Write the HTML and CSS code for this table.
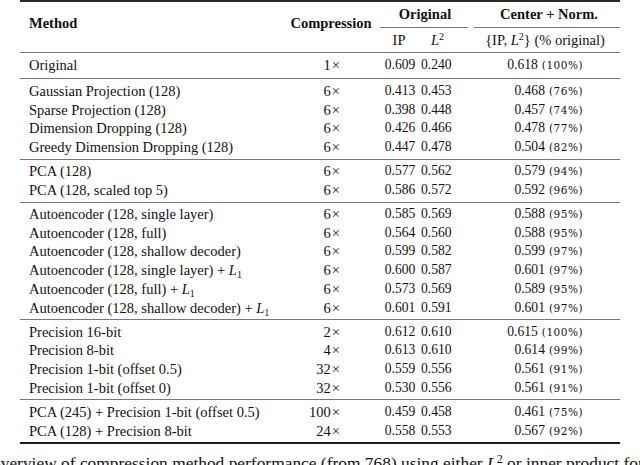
FILE: index.html
```html
<!DOCTYPE html>
<html>
<head>
<meta charset="utf-8">
<link rel="stylesheet" href="styles.css">
</head>
<body>
<div class="tbl">
  <div class="head">
    <div class="h-method">Method</div>
    <div class="h-comp">Compression</div>
    <div class="h-orig">Original</div>
    <div class="h-center">Center + Norm.</div>
    <div class="cmid cmid-orig"></div>
    <div class="cmid cmid-center"></div>
    <div class="h-ip">IP</div>
    <div class="h-l2"><i>L</i><sup>2</sup></div>
    <div class="h-combo">{IP, <i>L</i><sup>2</sup>} (% original)</div>
  </div>

  <div class="group group-first">
    <div class="row"><span class="m">Original</span><span class="c">1<span class="x">×</span></span><span class="ip">0.609</span><span class="l2">0.240</span><span class="cn">0.618<span class="pct">(100%)</span></span></div>
  </div>

  <div class="group">
    <div class="row"><span class="m">Gaussian Projection (128)</span><span class="c">6<span class="x">×</span></span><span class="ip">0.413</span><span class="l2">0.453</span><span class="cn">0.468<span class="pct">(76%)</span></span></div>
    <div class="row"><span class="m">Sparse Projection (128)</span><span class="c">6<span class="x">×</span></span><span class="ip">0.398</span><span class="l2">0.448</span><span class="cn">0.457<span class="pct">(74%)</span></span></div>
    <div class="row"><span class="m">Dimension Dropping (128)</span><span class="c">6<span class="x">×</span></span><span class="ip">0.426</span><span class="l2">0.466</span><span class="cn">0.478<span class="pct">(77%)</span></span></div>
    <div class="row"><span class="m">Greedy Dimension Dropping (128)</span><span class="c">6<span class="x">×</span></span><span class="ip">0.447</span><span class="l2">0.478</span><span class="cn">0.504<span class="pct">(82%)</span></span></div>
  </div>

  <div class="group">
    <div class="row"><span class="m">PCA (128)</span><span class="c">6<span class="x">×</span></span><span class="ip">0.577</span><span class="l2">0.562</span><span class="cn">0.579<span class="pct">(94%)</span></span></div>
    <div class="row"><span class="m">PCA (128, scaled top 5)</span><span class="c">6<span class="x">×</span></span><span class="ip">0.586</span><span class="l2">0.572</span><span class="cn">0.592<span class="pct">(96%)</span></span></div>
  </div>

  <div class="group">
    <div class="row"><span class="m">Autoencoder (128, single layer)</span><span class="c">6<span class="x">×</span></span><span class="ip">0.585</span><span class="l2">0.569</span><span class="cn">0.588<span class="pct">(95%)</span></span></div>
    <div class="row"><span class="m">Autoencoder (128, full)</span><span class="c">6<span class="x">×</span></span><span class="ip">0.564</span><span class="l2">0.560</span><span class="cn">0.588<span class="pct">(95%)</span></span></div>
    <div class="row"><span class="m">Autoencoder (128, shallow decoder)</span><span class="c">6<span class="x">×</span></span><span class="ip">0.599</span><span class="l2">0.582</span><span class="cn">0.599<span class="pct">(97%)</span></span></div>
    <div class="row"><span class="m">Autoencoder (128, single layer) + <i>L</i><sub>1</sub></span><span class="c">6<span class="x">×</span></span><span class="ip">0.600</span><span class="l2">0.587</span><span class="cn">0.601<span class="pct">(97%)</span></span></div>
    <div class="row"><span class="m">Autoencoder (128, full) + <i>L</i><sub>1</sub></span><span class="c">6<span class="x">×</span></span><span class="ip">0.573</span><span class="l2">0.569</span><span class="cn">0.589<span class="pct">(95%)</span></span></div>
    <div class="row"><span class="m">Autoencoder (128, shallow decoder) + <i>L</i><sub>1</sub></span><span class="c">6<span class="x">×</span></span><span class="ip">0.601</span><span class="l2">0.591</span><span class="cn">0.601<span class="pct">(97%)</span></span></div>
  </div>

  <div class="group">
    <div class="row"><span class="m">Precision 16-bit</span><span class="c">2<span class="x">×</span></span><span class="ip">0.612</span><span class="l2">0.610</span><span class="cn">0.615<span class="pct">(100%)</span></span></div>
    <div class="row"><span class="m">Precision 8-bit</span><span class="c">4<span class="x">×</span></span><span class="ip">0.613</span><span class="l2">0.610</span><span class="cn">0.614<span class="pct">(99%)</span></span></div>
    <div class="row"><span class="m">Precision 1-bit (offset 0.5)</span><span class="c">32<span class="x">×</span></span><span class="ip">0.559</span><span class="l2">0.556</span><span class="cn">0.561<span class="pct">(91%)</span></span></div>
    <div class="row"><span class="m">Precision 1-bit (offset 0)</span><span class="c">32<span class="x">×</span></span><span class="ip">0.530</span><span class="l2">0.556</span><span class="cn">0.561<span class="pct">(91%)</span></span></div>
  </div>

  <div class="group">
    <div class="row"><span class="m">PCA (245) + Precision 1-bit (offset 0.5)</span><span class="c">100<span class="x">×</span></span><span class="ip">0.459</span><span class="l2">0.458</span><span class="cn">0.461<span class="pct">(75%)</span></span></div>
    <div class="row"><span class="m">PCA (128) + Precision 8-bit</span><span class="c">24<span class="x">×</span></span><span class="ip">0.558</span><span class="l2">0.553</span><span class="cn">0.567<span class="pct">(92%)</span></span></div>
  </div>
</div>
<p class="caption">overview of compression method performance (from 768) using either <i>L</i><sup>2</sup> or inner product for</p>
</body>
</html>
```

FILE: styles.css
```css
html, body {
  margin: 0;
  padding: 0;
  background: #fff;
}

body {
  width: 640px;
  height: 465px;
  overflow: hidden;
  font-family: "Liberation Serif", "Times New Roman", serif;
  color: #111;
}

.tbl {
  margin-left: 20px;
  width: 600px;
  border-top: 2px solid #2a2a2a;
  border-bottom: 2px solid #1e1e1e;
  font-size: 14.5px;
  line-height: 18.7px;
}

.head,
.row {
  display: grid;
  grid-template-columns: 270px 82px 8px 38px 52px 150px;
}

.row {
  height: 18.7px;
}

.head {
  grid-template-rows: 25px 1px 24px;
}

.h-method,
.h-comp {
  grid-row: 1 / 4;
  font-weight: bold;
  padding-top: 11.6px;
}

.h-method {
  grid-column: 1;
  padding-left: 9px;
}

.h-comp {
  grid-column: 2;
  text-align: center;
}

.h-orig,
.h-center {
  grid-row: 1;
  align-self: center;
  font-weight: bold;
  text-align: center;
}

.h-orig {
  grid-column: 4 / 6;
}

.h-center {
  grid-column: 6;
  padding-left: 8px;
}

.cmid {
  grid-row: 2;
  background: #777;
}

.cmid-orig {
  grid-column: 4 / 6;
  margin-right: 2px;
}

.cmid-center {
  grid-column: 6;
  margin-left: 4px;
}

.h-ip,
.h-l2,
.h-combo {
  grid-row: 3;
  align-self: center;
}

.h-ip {
  grid-column: 4;
  text-align: center;
}

.h-l2 {
  grid-column: 5;
  padding-left: 13px;
}

.h-combo {
  grid-column: 6;
  text-align: center;
}

.group {
  border-top: 1px solid #777;
  padding: 2.5px 0 2px;
}

.group-first {
  padding: 2.5px 0 4.3px;
}

.m {
  grid-column: 1;
  padding-left: 9px;
  white-space: nowrap;
}

.c {
  grid-column: 2;
  text-align: right;
  padding-right: 32px;
}

.x {
  margin-left: 1px;
}

.ip,
.l2,
.cn {
  font-size: 13.6px;
}

.ip {
  grid-column: 4;
  text-align: center;
  padding-left: 2px;
}

.l2 {
  grid-column: 5;
  padding-left: 3px;
}

.cn {
  grid-column: 6;
  text-align: right;
  padding-right: 37px;
}

.pct {
  font-family: "DejaVu Serif", serif;
  font-size: 10.5px;
  line-height: 0;
  letter-spacing: 0.5px;
  margin-left: 4px;
}

sup {
  font-size: 0.7em;
  line-height: 0;
  vertical-align: 0.5em;
  font-style: normal;
}

sub {
  font-size: 0.7em;
  line-height: 0;
  vertical-align: -0.25em;
}

.caption {
  margin: 7.5px 0 0 -8px;
  font-size: 17.4px;
  line-height: 22px;
  white-space: nowrap;
}
```
